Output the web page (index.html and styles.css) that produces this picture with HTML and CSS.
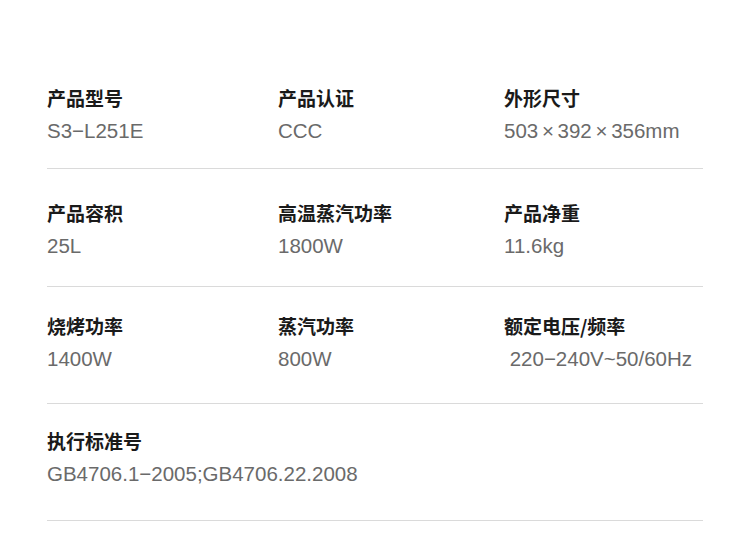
FILE: index.html
```html
<!DOCTYPE html>
<html lang="zh-CN">
<head>
<meta charset="utf-8">
<link rel="stylesheet" href="styles.css">
</head>
<body>
<div class="specs">
  <div class="row">
    <div class="cell"><div class="label">产品型号</div><div class="value">S3−L251E</div></div>
    <div class="cell"><div class="label">产品认证</div><div class="value">CCC</div></div>
    <div class="cell"><div class="label">外形尺寸</div><div class="value dims">503 × 392 × 356mm</div></div>
  </div>
  <div class="row">
    <div class="cell"><div class="label">产品容积</div><div class="value">25L</div></div>
    <div class="cell"><div class="label">高温蒸汽功率</div><div class="value">1800W</div></div>
    <div class="cell"><div class="label">产品净重</div><div class="value">11.6kg</div></div>
  </div>
  <div class="row">
    <div class="cell"><div class="label">烧烤功率</div><div class="value">1400W</div></div>
    <div class="cell"><div class="label">蒸汽功率</div><div class="value">800W</div></div>
    <div class="cell"><div class="label">额定电压/频率</div><div class="value">&nbsp;220−240V~50/60Hz</div></div>
  </div>
  <div class="row">
    <div class="cell wide"><div class="label">执行标准号</div><div class="value">GB4706.1−2005;GB4706.22.2008</div></div>
  </div>
</div>
</body>
</html>
```
FILE: styles.css
```css
html, body {
  margin: 0;
  padding: 0;
  background: #ffffff;
}
.specs {
  padding: 51px 47px 0 47px;
  width: 656px;
}
.row {
  display: grid;
  grid-template-columns: 231px 226px 1fr;
  border-bottom: 1px solid #dadada;
}
.row:nth-child(1) { padding: 35px 0 24px 0; }
.row:nth-child(2) { padding: 32px 0 27px 0; }
.row:nth-child(3) { padding: 27px 0 31px 0; }
.row:nth-child(4) { padding: 25px 0 33px 0; }
.cell.wide {
  grid-column: 1 / 4;
}
.label {
  font-family: "Noto Sans CJK SC", sans-serif;
  font-weight: 700;
  font-size: 19px;
  line-height: 24px;
  color: #1a1a1a;
}
.value {
  margin-top: 8px;
  font-family: "Liberation Sans", "Noto Sans CJK SC", sans-serif;
  font-size: 20.5px;
  line-height: 26px;
  color: #6a6a6a;
}
.dims {
  word-spacing: -2px;
}
```
